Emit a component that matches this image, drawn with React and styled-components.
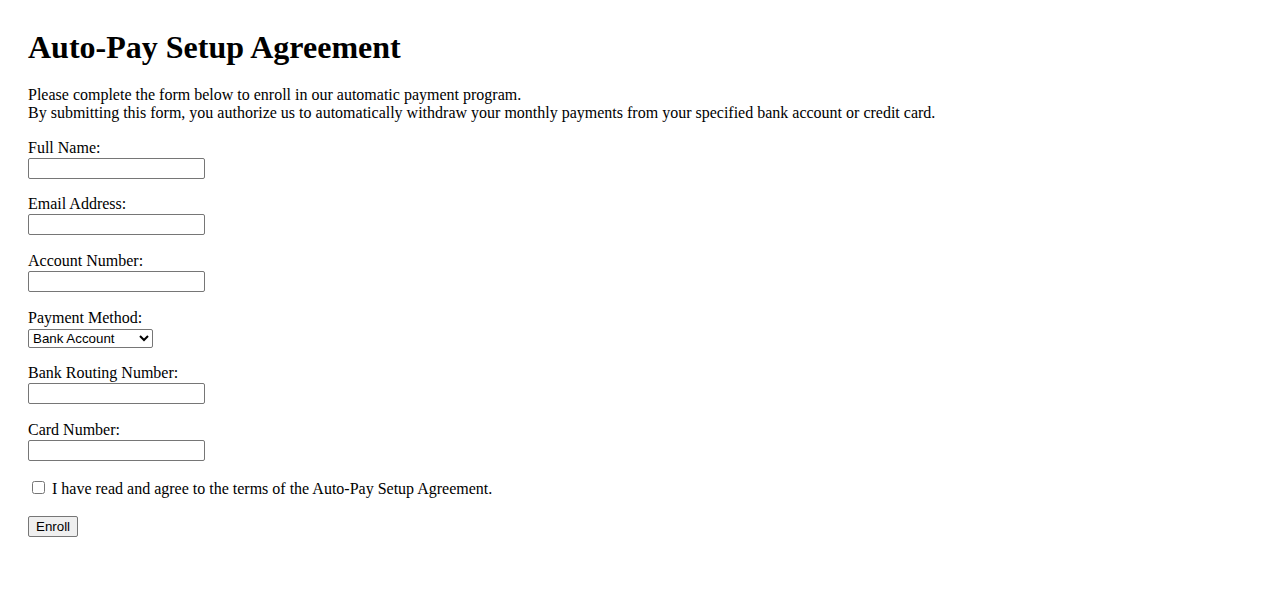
import React, { useState } from 'react';
import styled, { createGlobalStyle } from 'styled-components';

const GlobalStyle = createGlobalStyle`
  body {
    margin: 0;
    background: #fff;
    color: #000;
    font-family: "Liberation Serif", "Times New Roman", serif;
    font-size: 16px;
  }
`;

const Page = styled.main`
  padding: 28px;
`;

const Title = styled.h1`
  font-size: 32px;
  font-weight: bold;
  margin: 1px 0 20px;
  line-height: normal;
`;

const Intro = styled.p`
  margin: 0 0 17px;
  line-height: normal;
`;

const Form = styled.form`
  display: flex;
  flex-direction: column;
  align-items: flex-start;
`;

const Field = styled.div`
  display: flex;
  flex-direction: column;
  align-items: flex-start;
  margin-bottom: ${(p) => (p.$gap ?? 16.7)}px;
`;

const Label = styled.label`
  line-height: normal;
`;

const TextInput = styled.input`
  box-sizing: border-box;
  width: 177px;
  height: 21px;
  margin: 1px 0 0;
  padding: 1px 2px;
  border: 1px solid #767676;
  border-radius: 2px;
  background: #fff;
  font: 13.33px Arial, "Liberation Sans", sans-serif;
`;

const Select = styled.select`
  box-sizing: border-box;
  width: 125px;
  height: 19px;
  margin: 2px 0 0;
  padding: 0;
  border: 1px solid #767676;
  border-radius: 2px;
  background: #fff;
  color: #000;
  font: 13.33px Arial, "Liberation Sans", sans-serif;
`;

const CheckRow = styled.label`
  display: block;
  margin: 1px 0 18px;
  line-height: normal;
`;

const Checkbox = styled.input`
  width: 13px;
  height: 13px;
  margin: 3px 3px 3px 4px;
`;

const Button = styled.button`
  box-sizing: border-box;
  height: 21px;
  padding: 1px 7px;
  border: 1px solid #767676;
  border-radius: 2px;
  background: #efefef;
  color: #000;
  font: 13.33px Arial, "Liberation Sans", sans-serif;
  cursor: pointer;
`;

const fields = [
  { id: 'name', label: 'Full Name:', gap: 16.3 },
  { id: 'email', label: 'Email Address:' },
  { id: 'account', label: 'Account Number:' },
];

const App = () => {
  const [method, setMethod] = useState('bank');

  return (
    <Page>
      <GlobalStyle />
      <Title>Auto-Pay Setup Agreement</Title>
      <Intro>
        Please complete the form below to enroll in our automatic payment program.
        <br />
        By submitting this form, you authorize us to automatically withdraw your monthly payments from your specified bank account or credit card.
      </Intro>
      <Form onSubmit={(e) => e.preventDefault()}>
        {fields.map((f) => (
          <Field key={f.id} $gap={f.gap}>
            <Label htmlFor={f.id}>{f.label}</Label>
            <TextInput id={f.id} type="text" />
          </Field>
        ))}
        <Field $gap={16.4}>
          <Label htmlFor="method">Payment Method:</Label>
          <Select id="method" value={method} onChange={(e) => setMethod(e.target.value)}>
            <option value="bank">Bank Account</option>
            <option value="card">Credit Card</option>
          </Select>
        </Field>
        <Field>
          <Label htmlFor="routing">Bank Routing Number:</Label>
          <TextInput id="routing" type="text" />
        </Field>
        <Field>
          <Label htmlFor="card">Card Number:</Label>
          <TextInput id="card" type="text" />
        </Field>
        <CheckRow>
          <Checkbox type="checkbox" /> I have read and agree to the terms of the Auto-Pay Setup Agreement.
        </CheckRow>
        <Button type="submit">Enroll</Button>
      </Form>
    </Page>
  );
};

export default App;
